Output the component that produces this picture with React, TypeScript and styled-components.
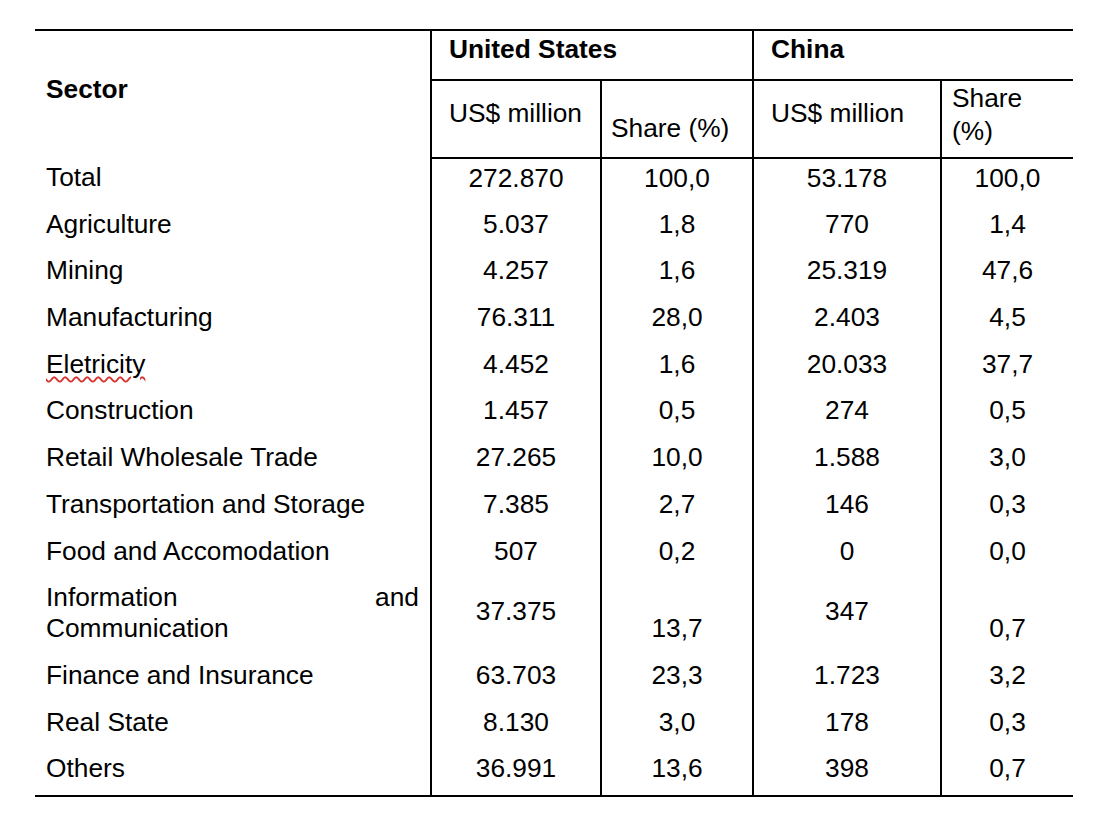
import React from 'react'
import styled, { createGlobalStyle } from 'styled-components'

const GlobalStyle = createGlobalStyle`
  html, body {
    margin: 0;
    padding: 0;
    background: #ffffff;
  }
  body {
    font-family: "Liberation Sans", Arial, Helvetica, sans-serif;
    color: #000000;
  }
`

const Page = styled.div`
  padding: 29px 25px 0 35px;
`

const Table = styled.table`
  width: 1038px;
  table-layout: fixed;
  border-collapse: collapse;
  font-size: 26.3px;
  line-height: 31px;
`

const Row = styled.tr<{ $h: number }>`
  height: ${({ $h }) => $h}px;
`

const Cell = styled.td<{
  $top?: number
  $left?: number
  $align?: 'left' | 'center' | 'justify'
  $edge?: boolean
  $capTop?: boolean
  $capBottom?: boolean
  $lh?: number
}>`
  vertical-align: top;
  padding: ${({ $top = 4 }) => $top}px 11px 0 ${({ $left = 11 }) => $left}px;
  text-align: ${({ $align = 'center' }) => $align};
  line-height: ${({ $lh = 31 }) => $lh}px;
  border-right: ${({ $edge }) => ($edge ? '2px solid #000' : 'none')};
  border-top: ${({ $capTop }) => ($capTop ? '2px solid #000' : 'none')};
  border-bottom: ${({ $capBottom }) => ($capBottom ? '2px solid #000' : 'none')};
  white-space: normal;
`

const HeadCell = styled(Cell).attrs({ as: 'th' })`
  font-weight: ${({ $bold }: { $bold?: boolean }) => ($bold ? 700 : 400)};
`

const Spelled = styled.span`
  text-decoration: underline wavy #d8352f;
  text-decoration-thickness: 1.5px;
  text-underline-offset: 3px;
`

const JustLine = styled.span`
  display: block;
  text-align: justify;
  text-align-last: justify;
`

type Line = {
  sector: string
  usVal: string
  usShare: string
  cnVal: string
  cnShare: string
}

const rows: Line[] = [
  { sector: 'Total', usVal: '272.870', usShare: '100,0', cnVal: '53.178', cnShare: '100,0' },
  { sector: 'Agriculture', usVal: '5.037', usShare: '1,8', cnVal: '770', cnShare: '1,4' },
  { sector: 'Mining', usVal: '4.257', usShare: '1,6', cnVal: '25.319', cnShare: '47,6' },
  { sector: 'Manufacturing', usVal: '76.311', usShare: '28,0', cnVal: '2.403', cnShare: '4,5' },
  { sector: 'Eletricity', usVal: '4.452', usShare: '1,6', cnVal: '20.033', cnShare: '37,7' },
  { sector: 'Construction', usVal: '1.457', usShare: '0,5', cnVal: '274', cnShare: '0,5' },
  { sector: 'Retail Wholesale Trade', usVal: '27.265', usShare: '10,0', cnVal: '1.588', cnShare: '3,0' },
  { sector: 'Transportation and Storage', usVal: '7.385', usShare: '2,7', cnVal: '146', cnShare: '0,3' },
  { sector: 'Food and Accomodation', usVal: '507', usShare: '0,2', cnVal: '0', cnShare: '0,0' },
  { sector: 'Information and Communication', usVal: '37.375', usShare: '13,7', cnVal: '347', cnShare: '0,7' },
  { sector: 'Finance and Insurance', usVal: '63.703', usShare: '23,3', cnVal: '1.723', cnShare: '3,2' },
  { sector: 'Real State', usVal: '8.130', usShare: '3,0', cnVal: '178', cnShare: '0,3' },
  { sector: 'Others', usVal: '36.991', usShare: '13,6', cnVal: '398', cnShare: '0,7' },
]

const SectorLabel = ({ name }: { name: string }) => {
  if (name === 'Eletricity') return <Spelled>{name}</Spelled>
  if (name === 'Information and Communication') {
    return (
      <>
        <JustLine>Information and</JustLine>
        Communication
      </>
    )
  }
  return <>{name}</>
}

const App = () => {
  return (
    <Page>
      <GlobalStyle />
      <Table>
        <colgroup>
          <col style={{ width: 396 }} />
          <col style={{ width: 170 }} />
          <col style={{ width: 152 }} />
          <col style={{ width: 188 }} />
          <col style={{ width: 132 }} />
        </colgroup>
        <thead>
          <Row $h={50}>
            <HeadCell rowSpan={2} $bold $align="left" $top={43} $edge $capTop>
              Sector
            </HeadCell>
            <HeadCell colSpan={2} $bold $align="left" $left={17} $top={3} $edge $capTop $capBottom>
              United States
            </HeadCell>
            <HeadCell colSpan={2} $bold $align="left" $left={17} $top={3} $capTop $capBottom>
              China
            </HeadCell>
          </Row>
          <Row $h={78}>
            <HeadCell $align="left" $left={17} $top={17} $edge $capBottom>
              US$ million
            </HeadCell>
            <HeadCell $align="left" $left={9} $top={32} $edge $capBottom>
              Share (%)
            </HeadCell>
            <HeadCell $align="left" $left={17} $top={17} $edge $capBottom>
              US$ million
            </HeadCell>
            <HeadCell $align="left" $left={10} $top={1} $lh={33} $capBottom>
              Share (%)
            </HeadCell>
          </Row>
        </thead>
        <tbody>
          {rows.map((r, i) => {
            const tall = r.sector.startsWith('Information')
            const last = i === rows.length - 1
            return (
              <Row key={r.sector} $h={tall ? 77.7 : 46.7}>
                <Cell $align="justify" $edge $capBottom={last}>
                  <SectorLabel name={r.sector} />
                </Cell>
                <Cell $top={tall ? 18 : 4} $edge $capBottom={last}>
                  {r.usVal}
                </Cell>
                <Cell $top={tall ? 35 : 4} $edge $capBottom={last}>
                  {r.usShare}
                </Cell>
                <Cell $top={tall ? 18 : 4} $edge $capBottom={last}>
                  {r.cnVal}
                </Cell>
                <Cell $top={tall ? 35 : 4} $capBottom={last}>
                  {r.cnShare}
                </Cell>
              </Row>
            )
          })}
        </tbody>
      </Table>
    </Page>
  )
}

export default App
